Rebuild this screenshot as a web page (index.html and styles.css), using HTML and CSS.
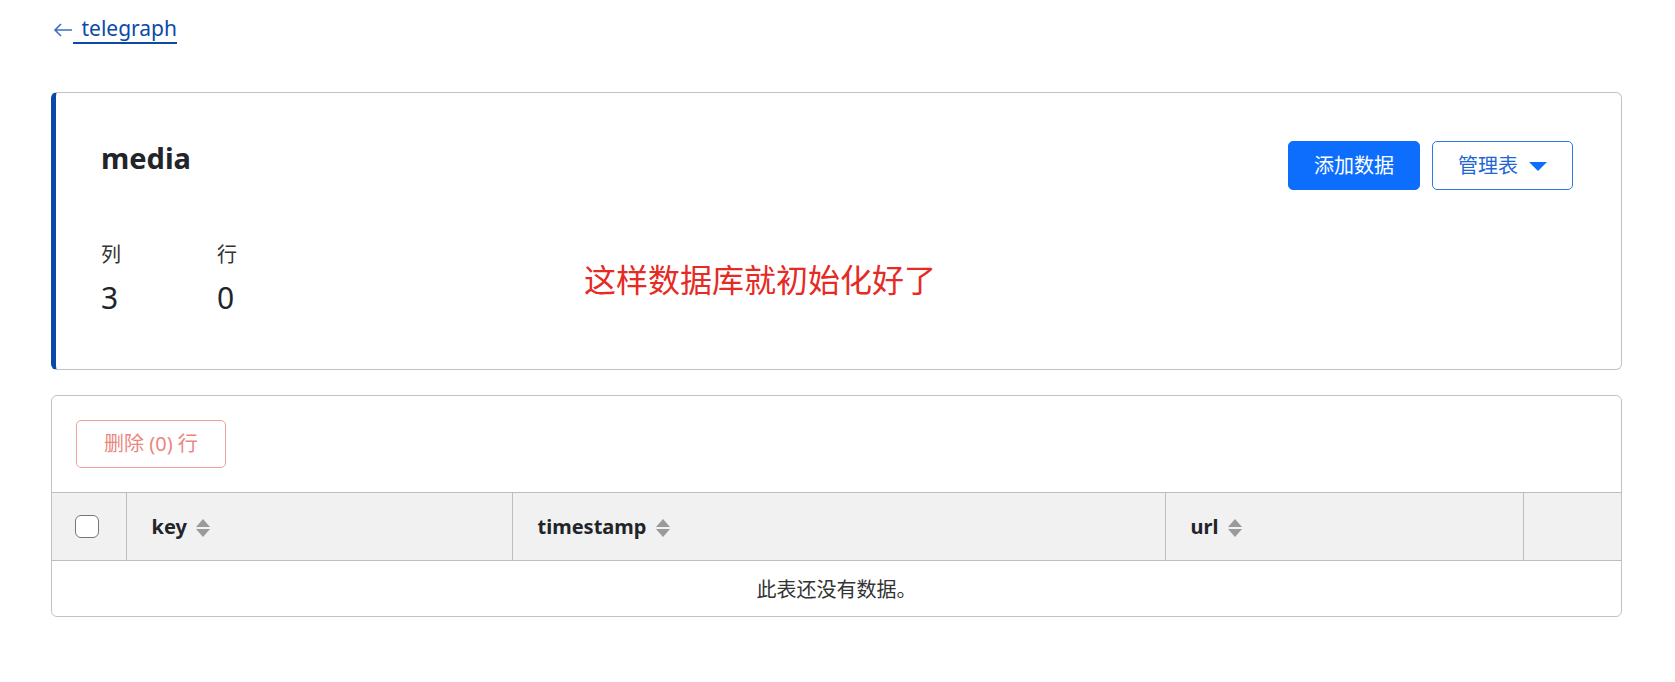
FILE: index.html
```html
<!DOCTYPE html>
<html lang="zh">
<head>
  <meta charset="UTF-8" />
  <meta name="viewport" content="width=device-width, initial-scale=1.0"/>
  <title>media</title>
  <link rel="stylesheet" href="styles.css">
</head>
<body>
  <div class="page">
    <!-- 返回链接 -->
    <a class="back" href="#">
      <svg class="back-arrow" width="20" height="16" viewBox="0 0 20 16">
        <path d="M19 8H2M8 2L2 8l6 6" fill="none" stroke="#3e6fc2" stroke-width="1.6"/>
      </svg><span class="back-text">&nbsp;telegraph</span>
    </a>

    <!-- 表信息 -->
    <div class="card info-card">
      <div class="info-head">
        <h1>media</h1>
        <div class="actions">
          <button class="btn btn-primary">添加数据</button>
          <button class="btn btn-outline">管理表 <span class="caret"></span></button>
        </div>
      </div>
      <div class="stats">
        <div class="stat">
          <div class="stat-label">列</div>
          <div class="stat-value">3</div>
        </div>
        <div class="stat">
          <div class="stat-label">行</div>
          <div class="stat-value">0</div>
        </div>
        <div class="note">这样数据库就初始化好了</div>
      </div>
    </div>

    <!-- 数据表 -->
    <div class="card table-card">
      <div class="toolbar">
        <button class="btn btn-danger" disabled>删除 (0) 行</button>
      </div>
      <table class="rows">
        <colgroup>
          <col style="width:74px">
          <col style="width:386px">
          <col style="width:653px">
          <col style="width:358px">
          <col>
        </colgroup>
        <thead>
          <tr>
            <th class="check-cell"><input type="checkbox" class="check"></th>
            <th>key <span class="sort"></span></th>
            <th>timestamp <span class="sort"></span></th>
            <th>url <span class="sort"></span></th>
            <th></th>
          </tr>
        </thead>
        <tbody>
          <tr>
            <td class="empty" colspan="5">此表还没有数据。</td>
          </tr>
        </tbody>
      </table>
    </div>
  </div>
</body>
</html>
```

FILE: styles.css
```css
body {
  margin: 0;
  background: #fff;
  color: #212529;
  font-family: "Noto Sans", "Noto Sans CJK SC", sans-serif;
}

.page {
  padding: 15px 53px 40px 51px;
}

/* 返回链接 */
.back {
  display: inline-flex;
  align-items: center;
  font-size: 21px;
  line-height: 30px;
  color: #0b4aa6;
  text-decoration: none;
  margin-left: 2px;
}

.back-arrow {
  margin-top: 1px;
}

.back-text {
  border-bottom: 2px solid #0b4aa6;
  line-height: 27px;
  padding-left: 3px;
}

/* 卡片 */
.card {
  border: 1px solid #c2c2c2;
  border-radius: 6px;
  background: #fff;
}

.info-card {
  margin-top: 48px;
  border-left: 5px solid #0b47a6;
  padding: 48px 48px 53px 45px;
}

.info-head {
  display: flex;
  justify-content: space-between;
  align-items: flex-start;
}

h1 {
  margin: 0;
  font-size: 29px;
  line-height: 34px;
  font-weight: 700;
}

.actions {
  display: flex;
  gap: 12px;
}

.btn {
  font-family: inherit;
  font-size: 20px;
  line-height: 29px;
  padding: 9px 25px;
  border-radius: 5px;
  border: 1px solid transparent;
  cursor: pointer;
}

.btn-primary {
  background: #0d6efd;
  border-color: #0d6efd;
  color: #fff;
}

.btn-outline {
  background: #fff;
  border-color: #2f7ae5;
  color: #1e67d3;
  display: flex;
  align-items: center;
  gap: 11px;
}

.caret {
  width: 0;
  height: 0;
  border-left: 9px solid transparent;
  border-right: 9px solid transparent;
  border-top: 9px solid #0d6efd;
  margin-top: 2px;
}

.stats {
  display: flex;
  margin-top: 50px;
}

.stat {
  width: 116px;
}

.stat-label {
  font-size: 20px;
  line-height: 30px;
  color: #333;
}

.stat-value {
  margin-top: 10px;
  font-size: 30px;
  line-height: 36px;
}

.note {
  margin-left: 251px;
  margin-top: 16px;
  font-size: 32px;
  line-height: 48px;
  color: #e62a24;
}

/* 数据表 */
.table-card {
  margin-top: 25px;
  overflow: hidden;
}

.toolbar {
  padding: 24px;
}

.btn-danger {
  background: #fff;
  border-color: #f0a39c;
  color: #e9877f;
  line-height: 30px;
  padding: 8px 27px;
  cursor: default;
}

.rows {
  width: 100%;
  border-collapse: collapse;
  table-layout: fixed;
}

.rows th {
  background: #f1f1f1;
  height: 67px;
  padding: 0 0 0 25px;
  text-align: left;
  font-size: 20px;
  font-weight: 700;
  border-top: 1px solid #bdbdbd;
  border-bottom: 1px solid #bdbdbd;
  border-left: 1px solid #bdbdbd;
  vertical-align: middle;
}

.rows th.check-cell {
  border-left: none;
  padding-left: 23px;
}

.check {
  appearance: none;
  display: block;
  width: 24px;
  height: 23px;
  margin: 0;
  border: 1px solid #777;
  border-radius: 6px;
  background: #fff;
}

.sort {
  display: inline-block;
  position: relative;
  width: 15px;
  height: 18px;
  margin-left: 4px;
  vertical-align: -3px;
}

.sort::before,
.sort::after {
  content: "";
  position: absolute;
  left: 0;
  border-left: 7px solid transparent;
  border-right: 7px solid transparent;
}

.sort::before {
  top: 0;
  border-bottom: 8px solid #9a9a9a;
}

.sort::after {
  bottom: 0;
  border-top: 8px solid #9a9a9a;
}

.empty {
  height: 55px;
  padding: 0;
  text-align: center;
  font-size: 20px;
  color: #333;
}
```
